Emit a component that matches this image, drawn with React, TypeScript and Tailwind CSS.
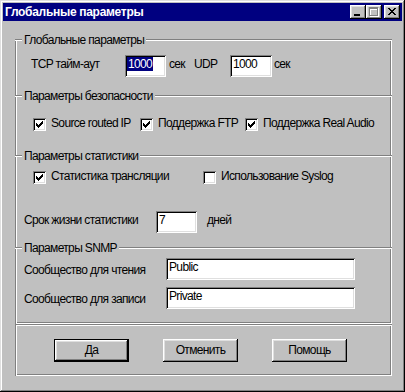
import React from "react"

const txt = "font-['Liberation_Sans',Arial,sans-serif] text-[12px] leading-[15px] tracking-[-0.65px]"
const etched = "shadow-[inset_1px_1px_0_#808080,inset_-1px_-1px_0_#fff,inset_2px_2px_0_#fff,inset_-2px_-2px_0_#808080]"
const sunken = "shadow-[inset_1px_1px_0_#808080,inset_-1px_-1px_0_#fff,inset_2px_2px_0_#000,inset_-2px_-2px_0_#dfdfdf]"
const raised = "shadow-[inset_-1px_-1px_0_#000,inset_1px_1px_0_#fff,inset_-2px_-2px_0_#808080,inset_2px_2px_0_#dfdfdf]"

function Line({ className = "" }: { className?: string }) {
  return <div className={`h-[2px] border-t border-[#808080] bg-white ${className}`} />
}

function GroupHeader({ title }: { title: string }) {
  return (
    <div className="h-[2px] flex items-center">
      <Line className="w-[7px]" />
      <span className="bg-[#c0c0c0] px-[2px] whitespace-nowrap">{title}</span>
      <Line className="flex-1" />
    </div>
  )
}

function Check({ checked = false }: { checked?: boolean }) {
  return (
    <div className={`w-[13px] h-[13px] shrink-0 bg-white flex items-center justify-center ${sunken}`}>
      {checked && (
        <svg width="7" height="7" viewBox="0 0 7 7" shapeRendering="crispEdges">
          <path d="M6 0h1v1h-1z M5 1h2v1h-2z M0 2h1v1h-1z M4 2h3v1h-3z M0 3h2v1h-2z M3 3h3v1h-3z M0 4h5v1h-5z M1 5h3v1h-3z M2 6h1v1h-1z" fill="#000" />
        </svg>
      )}
    </div>
  )
}

function CheckItem({ label, checked, width }: { label: string; checked?: boolean; width: string }) {
  return (
    <div className={`flex items-start gap-[5px] h-[13px] ${width}`}>
      <Check checked={checked} />
      <span className="-mt-[2px] whitespace-nowrap">{label}</span>
    </div>
  )
}

function Field({ value, width, selected = false }: { value: string; width: string; selected?: boolean }) {
  return (
    <div className={`h-[22px] shrink-0 bg-white pt-[2px] whitespace-nowrap ${selected ? "pl-[2px]" : "pl-[3px]"} ${width} ${sunken}`}>
      {selected ? <span className="bg-[#000080] text-white px-[1px]">{value}</span> : value}
    </div>
  )
}

function Button({ label, isDefault = false }: { label: string; isDefault?: boolean }) {
  return (
    <button className={`w-[75px] h-[23px] bg-[#c0c0c0] flex items-center justify-center ${isDefault ? "border border-black" : ""}`}>
      <span className={`w-full h-full flex items-center justify-center pb-[1px] ${raised}`}>{label}</span>
    </button>
  )
}

function TitleButton({ children }: { children: React.ReactNode }) {
  return <div className={`w-[16px] h-[14px] bg-[#c0c0c0] relative ${raised}`}>{children}</div>
}

export default function App() {
  return (
    <div className={`w-[405px] h-[392px] bg-[#c0c0c0] p-[3px] text-black ${txt} shadow-[inset_-1px_-1px_0_#000,inset_1px_1px_0_#dfdfdf,inset_-2px_-2px_0_#808080,inset_2px_2px_0_#fff]`}>
      <div className="h-[18px] bg-[#000080] flex items-center justify-between pl-[2px] pr-[2px]">
        <span className="font-bold text-[12px] tracking-[-0.3px] text-white">Глобальные параметры</span>
        <div className="flex items-center">
          <TitleButton>
            <svg className="absolute left-0 top-0" width="16" height="14" shapeRendering="crispEdges">
              <path d="M4 9h6v2h-6z" fill="#000" />
            </svg>
          </TitleButton>
          <TitleButton>
            <svg className="absolute left-0 top-0" width="16" height="14" shapeRendering="crispEdges">
              <path d="M4 3h9v9h-9z M5 5v6h7v-6z" fill="#fff" fillRule="evenodd" />
              <path d="M3 2h9v9h-9z M4 4v6h7v-6z" fill="#808080" fillRule="evenodd" />
            </svg>
          </TitleButton>
          <div className="w-[2px]" />
          <TitleButton>
            <svg className="absolute left-0 top-0" width="16" height="14" shapeRendering="crispEdges">
              <path d="M4 3h2v1h-2z M10 3h2v1h-2z M5 4h2v1h-2z M9 4h2v1h-2z M6 5h4v1h-4z M7 6h2v1h-2z M6 7h4v1h-4z M5 8h2v1h-2z M9 8h2v1h-2z M4 9h2v1h-2z M10 9h2v1h-2z" fill="#000" />
            </svg>
          </TitleButton>
        </div>
      </div>

      <div className={`mt-[18px] ml-[12px] w-[377px] h-[285px] flex flex-col ${etched}`}>
        <section className="h-[56px]">
          <GroupHeader title="Глобальные параметры" />
          <div className="flex items-start pt-[14px] pl-[16px] whitespace-nowrap">
            <span className="w-[94px] mt-[2px]">TCP тайм-аут</span>
            <Field value="1000" width="w-[41px]" selected />
            <span className="w-[25px] ml-[3px] mt-[2px]">сек</span>
            <span className="w-[36px] mt-[2px]">UDP</span>
            <Field value="1000" width="w-[42px]" />
            <span className="ml-[2px] mt-[2px]">сек</span>
          </div>
        </section>

        <section className="h-[60px]">
          <GroupHeader title="Параметры безопасности" />
          <div className="flex pt-[21px] pl-[18px]">
            <CheckItem label="Source routed IP" checked width="w-[107px]" />
            <CheckItem label="Поддержка FTP" checked width="w-[105px]" />
            <CheckItem label="Поддержка Real Audio" checked width="flex-1" />
          </div>
        </section>

        <section className="h-[92px]">
          <GroupHeader title="Параметры статистики" />
          <div className="flex pt-[14px] pl-[18px]">
            <CheckItem label="Статистика трансляции" checked width="w-[170px]" />
            <CheckItem label="Использование Syslog" width="flex-1" />
          </div>
          <div className="flex items-start mt-[27px] pl-[9px] whitespace-nowrap">
            <span className="w-[132px] mt-[2px]">Срок жизни статистики</span>
            <Field value="7" width="w-[41px]" />
            <span className="ml-[10px] mt-[2px]">дней</span>
          </div>
        </section>

        <section className="flex-1">
          <GroupHeader title="Параметры SNMP" />
          <div className="flex flex-col gap-[7px] pt-[9px] pl-[9px] whitespace-nowrap">
            <div className="flex items-start">
              <span className="w-[142px] mt-[5px]">Сообщество для чтения</span>
              <Field value="Public" width="w-[189px]" />
            </div>
            <div className="flex items-start">
              <span className="w-[142px] mt-[5px]">Сообщество для записи</span>
              <Field value="Private" width="w-[189px]" />
            </div>
          </div>
        </section>
      </div>

      <div className={`ml-[12px] w-[377px] h-[52px] flex items-start pt-[15px] pl-[39px] gap-[34px] ${etched}`}>
        <Button label="Да" isDefault />
        <Button label="Отменить" />
        <Button label="Помощь" />
      </div>
    </div>
  )
}
